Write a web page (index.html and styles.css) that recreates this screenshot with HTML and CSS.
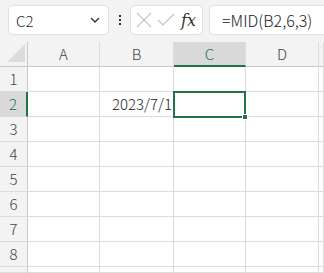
FILE: index.html
```html
<!DOCTYPE html>
<html lang="ja">
<head>
  <meta charset="UTF-8">
  <title>Excel - MID</title>
  <link rel="stylesheet" href="styles.css">
</head>
<body>

  <div class="toolbar">
    <div class="namebox">
      <span>C2</span>
      <svg class="chevron" width="10" height="6" viewBox="0 0 10 6"><path d="M1 1 L5 5 L9 1" fill="none" stroke="#333" stroke-width="1.3"/></svg>
    </div>
    <div class="dots"><i></i><i></i><i></i></div>
    <div class="fxbox">
      <svg width="18" height="18" viewBox="0 0 18 18"><path d="M2 2 L16 16 M16 2 L2 16" stroke="#c4c4c4" stroke-width="1.2"/></svg>
      <svg width="18" height="18" viewBox="0 0 18 18"><path d="M1 9 L6 14 L17 3" fill="none" stroke="#c4c4c4" stroke-width="1.2"/></svg>
      <span class="fx">fx</span>
    </div>
    <div class="formula">=MID(B2,6,3)</div>
  </div>

  <div class="sheet">
    <div class="corner"><div class="tri"></div></div>
    <div class="colhead">A</div>
    <div class="colhead">B</div>
    <div class="colhead active">C</div>
    <div class="colhead">D</div>
    <div class="colhead"></div>

    <div class="rowhead">1</div>
    <div class="cell"></div><div class="cell"></div><div class="cell"></div><div class="cell"></div><div class="cell"></div>

    <div class="rowhead active">2</div>
    <div class="cell"></div><div class="cell num">2023/7/1</div><div class="cell selected"><span class="handle"></span></div><div class="cell"></div><div class="cell"></div>

    <div class="rowhead">3</div>
    <div class="cell"></div><div class="cell"></div><div class="cell"></div><div class="cell"></div><div class="cell"></div>

    <div class="rowhead">4</div>
    <div class="cell"></div><div class="cell"></div><div class="cell"></div><div class="cell"></div><div class="cell"></div>

    <div class="rowhead">5</div>
    <div class="cell"></div><div class="cell"></div><div class="cell"></div><div class="cell"></div><div class="cell"></div>

    <div class="rowhead">6</div>
    <div class="cell"></div><div class="cell"></div><div class="cell"></div><div class="cell"></div><div class="cell"></div>

    <div class="rowhead">7</div>
    <div class="cell"></div><div class="cell"></div><div class="cell"></div><div class="cell"></div><div class="cell"></div>

    <div class="rowhead">8</div>
    <div class="cell"></div><div class="cell"></div><div class="cell"></div><div class="cell"></div><div class="cell"></div>

    <div class="rowhead"></div>
    <div class="cell"></div><div class="cell"></div><div class="cell"></div><div class="cell"></div><div class="cell"></div>
  </div>

</body>
</html>
```

FILE: styles.css
```css
* {
  margin: 0;
  padding: 0;
  box-sizing: border-box;
}

body {
  width: 324px;
  height: 273px;
  overflow: hidden;
  background-color: #f3f3f3;
  font-family: "Noto Sans CJK JP", "Noto Sans", sans-serif;
  font-weight: 300;
  color: #222;
}

.toolbar {
  height: 42px;
  display: flex;
  align-items: flex-start;
  padding: 5px 0 0 8px;
}

.namebox {
  width: 101px;
  height: 30px;
  background-color: white;
  border: 1px solid #e0e0e0;
  border-radius: 5px;
  display: flex;
  align-items: center;
  justify-content: space-between;
  padding: 0 8px 0 7px;
  font-size: 15px;
}

.dots {
  width: 21px;
  height: 30px;
  display: flex;
  flex-direction: column;
  align-items: center;
  justify-content: center;
  gap: 2px;
}

.dots i {
  width: 2px;
  height: 2px;
  background-color: #333;
}

.fxbox {
  width: 73px;
  height: 30px;
  background-color: white;
  border: 1px solid #e0e0e0;
  border-radius: 5px;
  display: flex;
  align-items: center;
  gap: 4px;
  padding: 0 4px;
}

.fx {
  font-family: "DejaVu Serif", "Liberation Serif", serif;
  font-style: italic;
  font-weight: normal;
  font-size: 16px;
  color: #333;
  margin-left: 2px;
}

.formula {
  width: 115px;
  height: 30px;
  margin-left: 6px;
  background-color: white;
  border: 1px solid #e0e0e0;
  border-right: none;
  border-radius: 5px 0 0 5px;
  padding-left: 12px;
  font-size: 16px;
  line-height: 28px;
}

.sheet {
  display: grid;
  grid-template-columns: 28px 72px 74px 72px 73px 5px;
  grid-template-rows: repeat(9, 25px) 6px;
  background-color: white;
}

.corner {
  background-color: #f3f3f3;
  border-right: 1px solid #c8c8c8;
  border-bottom: 1px solid #c8c8c8;
  position: relative;
}

.tri {
  position: absolute;
  right: 2px;
  bottom: 4px;
  width: 0;
  height: 0;
  border-left: 18px solid transparent;
  border-bottom: 18px solid #dcdcdc;
}

.colhead {
  background-color: #f3f3f3;
  border-right: 1px solid #dcdcdc;
  border-bottom: 1px solid #c8c8c8;
  font-size: 15px;
  color: #444;
  text-align: center;
  line-height: 24px;
}

.colhead.active {
  background-color: #d9d9d9;
  color: #217346;
  border-bottom: 2px solid #217346;
}

.rowhead {
  background-color: #f3f3f3;
  border-right: 1px solid #c8c8c8;
  border-bottom: 1px solid #dcdcdc;
  font-size: 15px;
  color: #444;
  text-align: center;
  line-height: 24px;
}

.rowhead.active {
  background-color: #d9d9d9;
  color: #217346;
  border-right: 2px solid #217346;
}

.cell {
  border-right: 1px solid #dcdcdc;
  border-bottom: 1px solid #dcdcdc;
  font-size: 15px;
  line-height: 24px;
}

.num {
  text-align: right;
  padding-right: 1px;
}

.selected {
  position: relative;
  border: 2px solid #217346;
  margin: -1px 0 -1px -1px;
}

.handle {
  position: absolute;
  right: -4px;
  bottom: -4px;
  width: 6px;
  height: 6px;
  background-color: #217346;
  border: 1px solid white;
}
```
